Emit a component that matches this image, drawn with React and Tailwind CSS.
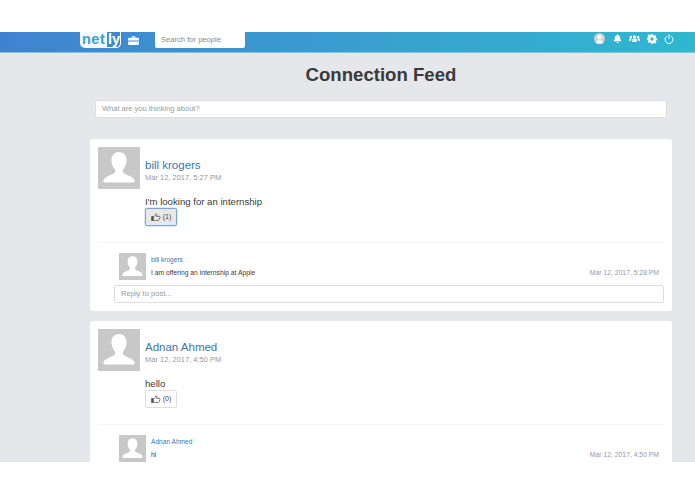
import React from "react";

const font = { fontFamily: '"Helvetica Neue", "Liberation Sans", Arial, sans-serif' };

function Avatar({ cls }) {
  return (
    <div className={`${cls} shrink-0 bg-[#c8c8c8] overflow-hidden`}>
      <svg viewBox="0 0 42 42" className="w-full h-full block">
        <path fill="#fff" d="M21 5c-5 0-7.6 3.7-7.6 8.6 0 3.4 1.5 6.6 3.4 8.6.7 1 .7 2.6-.2 3.6-1.5 1.400-4.500 2.400-6.800 3.400-2 .9-4 2-4.400 4.600-.2 1.100.3 1.800 1.400 1.800h28.400c1.100 0 1.600-.7 1.400-1.800-.4-2.600-2.400-3.700-4.400-4.600-2.300-1-5.300-2-6.800-3.400-.9-1-.9-2.600-.2-3.600 1.900-2 3.400-5.200 3.400-8.600C28.600 8.700 26 5 21 5z" />
      </svg>
    </div>
  );
}

function Thumb() {
  return (
    <svg viewBox="0 0 12 10" className="w-[10px] h-[8px]" fill="none" stroke="#555" strokeWidth="1">
      <path d="M.5 4.500h2.200v5H.5z" fill="#555" />
      <path d="M2.800 5c1.400-.7 2.600-2.200 3-4 .9 0 1.400.8 1.200 2l-.3 1.200h3.500c.8 0 1.200.9.8 1.500L9.500 8.800c-.3.5-.7.7-1.200.7H5c-.9 0-1.500-.4-2.200-.6" />
    </svg>
  );
}

function Post({ name, date, body, likes, active, reply, replyDate, showInput, cardCls }) {
  return (
    <div className={`bg-white rounded-[3px] ml-[90px] w-[582px] px-2 pt-2 shrink-0 ${cardCls}`}>
      <div className="flex gap-[5px]">
        <Avatar cls="w-[42px] h-[42px]" />
        <div className="pt-[11px]">
          <div className="text-[11.5px] leading-[14px] text-[#3b76b0]">{name}</div>
          <div className="text-[7.5px] leading-[10px] mt-[1px] text-[#999]">{date}</div>
        </div>
      </div>
      <div className="pl-[47px] mt-[6px]">
        <div className="text-[9.6px] leading-[13px] text-[#3a3a3a]">{body}</div>
        <div
          className={`w-[32px] h-[18px] rounded-[2px] flex items-center justify-center gap-[2px] text-[7px] text-[#444] border ${
            active ? "border-[#7aa7d6] bg-[#e8e8e8] shadow-[0_0_2px_#8ab4e0]" : "border-[#ddd] bg-white"
          }`}
        >
          <Thumb />
          <span>({likes})</span>
        </div>
      </div>
      <div className="mt-[16px] border-t border-[#f3f3f3]" />
      <div className="flex mt-[10px] pl-[21px] pr-[5px]">
        <Avatar cls="w-[27px] h-[27px]" />
        <div className="ml-[5px] flex-1 pt-[2px]">
          <div className="text-[6.6px] leading-[9px] text-[#3b76b0]">{name}</div>
          <div className="flex justify-between items-center mt-[4px]">
            <span className="text-[6.75px] leading-[9px] text-[#3a3a3a]">{reply}</span>
            <span className="text-[6.8px] leading-[9px] text-[#999]">{replyDate}</span>
          </div>
        </div>
      </div>
      {showInput && (
        <div className="ml-[16px] w-[550px] h-[18px] mt-[5px] border border-[#ddd] rounded-[2px] flex items-center px-[6px] text-[7.6px] text-[#999]">
          Reply to post...
        </div>
      )}
    </div>
  );
}

export default function App() {
  return (
    <div className="w-[695px] h-[494px] bg-white overflow-hidden flex flex-col" style={font}>
      <div className="h-8 shrink-0" />
      <div className="h-[21px] shrink-0 flex items-start bg-gradient-to-r from-[#3f83d0] to-[#2fb8cf] border-b border-[#7fc4dc]">
        <div className="ml-[80px] w-[41px] h-[16px] flex items-stretch bg-white/95 rounded-b-[5px] text-[14.5px] leading-[15px] font-bold">
          <span className="text-[#3aa0cf] pl-[2px] w-[27px] tracking-[0.5px]">net</span>
          <span className="flex-1 bg-[#3f88cf] text-white border border-t-0 border-white rounded-br-[5px] pl-[1px]">ly</span>
        </div>
        <svg viewBox="0 0 12 10" className="ml-[7px] mt-[4px] w-[11px] h-[9px]" fill="#fff">
          <path d="M4 1.500C4 .7 4.500.3 5 .3h2c.5 0 1 .4 1 1.200V2h3c.5 0 1 .4 1 1v2H0V3c0-.6.5-1 1-1h3zm1 .5h2v-.7H5zM0 6h12v3c0 .5-.4 1-1 1H1c-.6 0-1-.5-1-1z" />
        </svg>
        <div className="ml-[16px] w-[90px] h-[16px] bg-white rounded-b-[2px] flex items-center pl-[6px] text-[7.6px] text-[#8a8a8a]">
          Search for people
        </div>
        <div className="ml-auto mr-[21px] mt-[1px] flex items-center gap-[7px]">
          <div className="w-[11px] h-[11px] rounded-full bg-[#d0d0d0] overflow-hidden mr-[1px]">
            <svg viewBox="0 0 12 12" className="w-full h-full" fill="#fff">
              <circle cx="6" cy="4.600" r="2.400" />
              <path d="M1.500 12c.3-3 2-4.200 4.500-4.200S10.200 9 10.500 12z" />
            </svg>
          </div>
          <svg viewBox="0 0 12 12" className="w-[9px] h-[10px]" fill="#fff">
            <path d="M6 0c.5 0 .9.4.9.9C8.700 1.300 9.600 2.800 9.600 4.800c0 2.300.8 3.200 1.800 4.200H.6c1-1 1.800-1.900 1.800-4.200 0-2 .9-3.500 2.700-3.900C5.100.4 5.500 0 6 0zM4.700 10h2.600c0 .8-.6 1.400-1.300 1.400S4.700 10.800 4.700 10z" />
          </svg>
          <svg viewBox="0 0 14 10" className="w-[11px] h-[9px]" fill="#fff">
            <circle cx="7" cy="2.800" r="2" />
            <path d="M4.200 9.500V7c0-1.500 1-2 2.800-2s2.800.5 2.800 2v2.500z" />
            <circle cx="2.400" cy="3" r="1.500" />
            <path d="M0 8V6.200C0 5.200.8 4.700 2.400 4.700c.5 0 .8 0 1.100.1-.5.5-.6 1.200-.6 2V8z" />
            <circle cx="11.600" cy="3" r="1.500" />
            <path d="M14 8V6.200c0-1-.8-1.500-2.400-1.500-.5 0-.8 0-1.100.1.500.5.600 1.200.600 2V8z" />
          </svg>
          <svg viewBox="0 0 12 12" className="w-[10px] h-[10px]" fill="#fff">
            <path d="M5 0h2l.3 1.600 1.100.5L9.800 1.200l1.400 1.400-.9 1.400.5 1.100 1.600.3v2l-1.600.3-.5 1.100.9 1.400-1.400 1.400-1.400-.9-1.100.5L7 12H5l-.3-1.600-1.100-.5-1.400.9L.8 9.400l.9-1.400-.5-1.100L-.4 6.600v-2l1.600-.3.5-1.100-.9-1.400 1.400-1.400 1.400.9 1.100-.5zM6 4a2 2 0 100 4 2 2 0 000-4z" fillRule="evenodd" />
          </svg>
          <svg viewBox="0 0 12 12" className="w-[10px] h-[10px]" fill="none" stroke="#fff" strokeWidth="1.200" strokeLinecap="round">
            <path d="M6 .8v4.700" />
            <path d="M3.300 2.600a4.800 4.800 0 105.400 0" />
          </svg>
        </div>
      </div>
      <main className="h-[409px] shrink-0 bg-[#e5e7eb] overflow-hidden flex flex-col">
        <h1 className="mt-[10px] ml-[95px] w-[572px] text-center text-[18.6px] leading-[24px] font-bold text-[#3a3a3a]">
          Connection Feed
        </h1>
        <div className="mt-[13px] ml-[95px] w-[572px] h-[18px] shrink-0 bg-white border border-[#ddd] rounded-[2px] flex items-center px-[6px] text-[7.5px] text-[#999]">
          What are you thinking about?
        </div>
        <Post
          cardCls="mt-[21px] h-[172px]"
          name="bill krogers"
          date="Mar 12, 2017, 5:27 PM"
          body="I'm looking for an internship"
          likes={1}
          active
          reply="I am offering an internship at Apple"
          replyDate="Mar 12, 2017, 5:28 PM"
          showInput
        />
        <Post
          cardCls="mt-[10px] h-[172px]"
          name="Adnan Ahmed"
          date="Mar 12, 2017, 4:50 PM"
          body="hello"
          likes={0}
          reply="hi"
          replyDate="Mar 12, 2017, 4:50 PM"
        />
      </main>
    </div>
  );
}
